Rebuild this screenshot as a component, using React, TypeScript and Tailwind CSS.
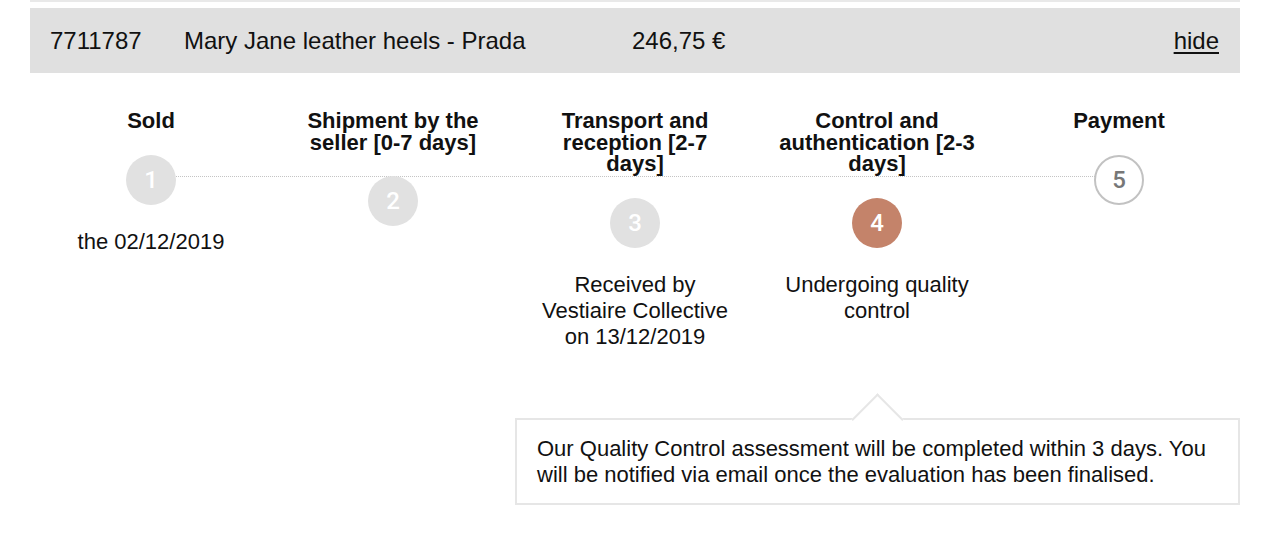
const steps = [
  { n: 1, title: 'Sold', desc: 'the 02/12/2019', state: 'done' },
  { n: 2, title: 'Shipment by the seller [0-7 days]', desc: '', state: 'done' },
  { n: 3, title: 'Transport and reception [2-7 days]', desc: 'Received by Vestiaire Collective on 13/12/2019', state: 'done' },
  { n: 4, title: 'Control and authentication [2-3 days]', desc: 'Undergoing quality control', state: 'current' },
  { n: 5, title: 'Payment', desc: '', state: 'todo' },
];

function StepCircle({ n, state }: { n: number; state: string }) {
  const look =
    state === 'current'
      ? 'bg-[#c4836a] text-white'
      : state === 'done'
        ? 'bg-[#e1e1e1] text-white'
        : 'bg-white border-2 border-[#c2c2c2] text-[#777]';
  return (
    <div
      className={`relative z-10 flex h-[50px] w-[50px] items-center justify-center rounded-full font-['Roboto',sans-serif] text-[24px] font-medium ${look}`}
    >
      {n}
    </div>
  );
}

export default function App() {
  return (
    <div className="min-h-[536px] bg-white pl-[30px] pr-[34px] font-['Liberation_Sans',Arial,sans-serif] text-[#111]">
      <div className="h-[2px] bg-[#e9e9e9]" />
      <div className="mt-[6px] flex h-[65px] items-center bg-[#e0e0e0] pl-[20px] pr-[21px] text-[24px]">
        <span className="w-[134px]">7711787</span>
        <span className="w-[448px]">Mary Jane leather heels - Prada</span>
        <span>246,75 €</span>
        <a className="ml-auto underline underline-offset-[3px]">hide</a>
      </div>

      <div className="relative mt-[37px] grid grid-cols-5 items-start">
        <div className="absolute left-[121px] right-[121px] top-[66px] border-t border-dotted border-[#c4c4c4]" />
        {steps.map(s => (
          <div key={s.n} className="flex flex-col items-center px-[20px] text-center">
            <p className="text-[22px] font-bold leading-[21.5px]">{s.title}</p>
            <div className="mt-[23px]">
              <StepCircle n={s.n} state={s.state} />
            </div>
            {s.desc && <p className="mt-[24px] text-[22px] leading-[26px]">{s.desc}</p>}
          </div>
        ))}
      </div>

      <div className="relative ml-auto mt-[68px] w-[725px] border-2 border-[#e6e6e6] bg-white px-[20px] pb-[15px] pt-[16px] text-[22px] leading-[26px]">
        <div className="absolute -top-[19px] left-[342px] h-[37px] w-[37px] rotate-45 border-l-2 border-t-2 border-[#e6e6e6] bg-white" />
        <p className="relative">
          Our Quality Control assessment will be completed within 3 days. You will be notified via email once the
          evaluation has been finalised.
        </p>
      </div>
    </div>
  );
}
